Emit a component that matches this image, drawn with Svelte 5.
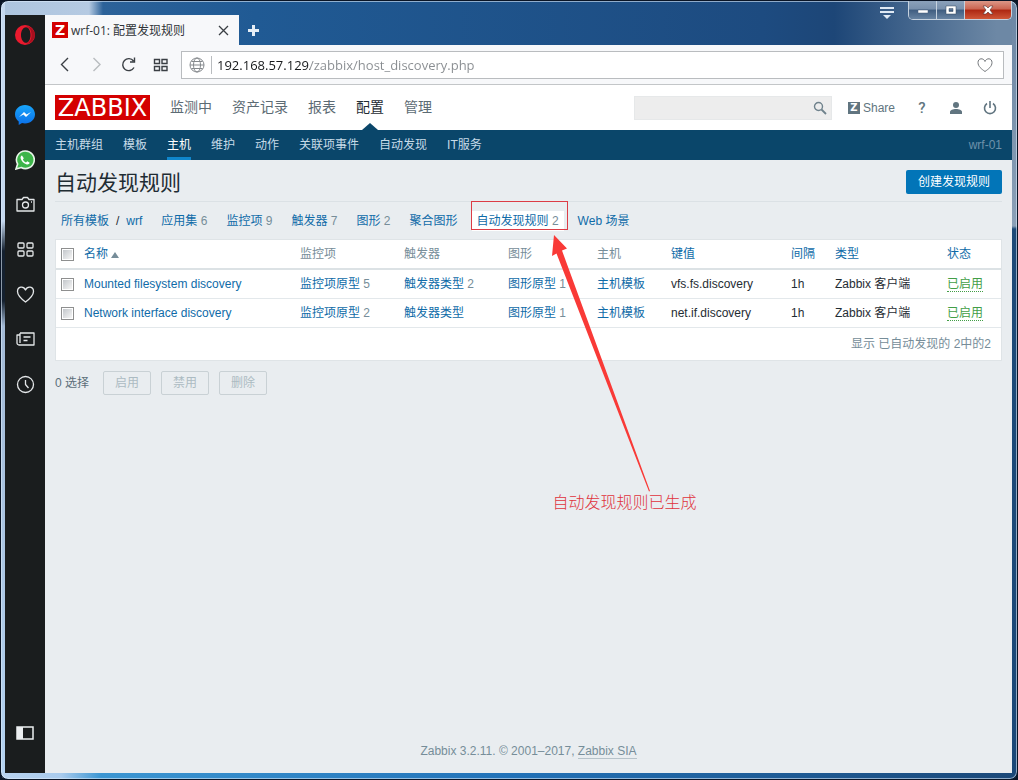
<script lang="ts">
  const mainMenu = ["监测中", "资产记录", "报表", "配置", "管理"];
  const subMenu = ["主机群组", "模板", "主机", "维护", "动作", "关联项事件", "自动发现", "IT服务"];

  const hostLinks = [
    { label: "应用集", count: 6 },
    { label: "监控项", count: 9 },
    { label: "触发器", count: 7 },
    { label: "图形", count: 2 },
    { label: "聚合图形" },
    { label: "自动发现规则", count: 2, selected: true },
    { label: "Web 场景" },
  ];

  const columns = [
    { label: "名称", share: 216, sortable: true, sorted: true },
    { label: "监控项", share: 104 },
    { label: "触发器", share: 104 },
    { label: "图形", share: 89 },
    { label: "主机", share: 74 },
    { label: "键值", share: 120, sortable: true },
    { label: "间隔", share: 44, sortable: true },
    { label: "类型", share: 112, sortable: true },
    { label: "状态", share: 59, sortable: true },
  ];
  const totalShare = 945;

  const rules = [
    { name: "Mounted filesystem discovery", items: 5, triggers: 2, graphs: 1, key: "vfs.fs.discovery" },
    { name: "Network interface discovery", items: 2, triggers: 0, graphs: 1, key: "net.if.discovery" },
  ];

  let url = $state("192.168.57.129/zabbix/host_discovery.php");
  let query = $state("");
  let checked = $state([false, false]);
  let selectedCount = $derived(checked.filter(Boolean).length);

  function toggleAll(event: Event) {
    const on = (event.currentTarget as HTMLInputElement).checked;
    checked = rules.map(() => on);
  }
</script>

<div class="window">
  <div class="window-controls">
    <button class="tab-menu" aria-label="Tab menu">
      <svg width="14" height="13" viewBox="0 0 14 13" fill="#dfe9f4">
        <path d="M0 1h14v2H0zM0 5h14v2H0zM3 9h8l-4 4z" />
      </svg>
    </button>
    <div class="control-group">
      <button aria-label="Minimize">
        <svg width="12" height="12" viewBox="0 0 12 12"><path d="M1 6h10v3H1z" fill="#fff" stroke="#4a5f78" stroke-width=".5" /></svg>
      </button>
      <button aria-label="Maximize">
        <svg width="12" height="12" viewBox="0 0 12 12"><path d="M1 2h10v8H1zM4 4.500v3h4v-3z" fill="#fff" fill-rule="evenodd" stroke="#34485f" stroke-width=".5" /></svg>
      </button>
      <button class="close" aria-label="Close">
        <svg width="12" height="12" viewBox="0 0 12 12"><path d="M1 2h3l2 2 2-2h3L8 6l3 4H8L6 8l-2 2H1l3-4z" fill="#fff" stroke="#57302f" stroke-width=".6" /></svg>
      </button>
    </div>
  </div>

  <aside class="sidebar">
    <button class="opera" aria-label="Opera">
      <svg width="20" height="20" viewBox="0 0 20 20">
        <path d="M10 0a10 10 0 1 0 0 20 10 10 0 0 0 0-20zm1 2.200c2.600 0 4.500 3.300 4.500 7.800s-1.900 7.800-4.500 7.800S6 14.500 6 10s2.400-7.800 5-7.800z" fill="#ea1a2e" />
        <path d="M11 1c3 1 5.500 4 5.500 9s-2.500 8-5.500 9a9.500 9.500 0 0 0 9-9 9.500 9.500 0 0 0-9-9z" fill="#a80f1e" />
      </svg>
    </button>
    <button aria-label="Messenger">
      <svg width="20" height="20" viewBox="0 0 20 20">
        <defs>
          <linearGradient id="messenger" x1="0" y1="0" x2="0" y2="1">
            <stop offset="0" stop-color="#18a5fb" />
            <stop offset="1" stop-color="#0b6fe8" />
          </linearGradient>
        </defs>
        <path d="M10 0C4.400 0 0 4 0 9.300c0 3 1.400 5.500 3.700 7.200V20l3.300-1.900c1 .300 2 .400 3 .400 5.600 0 10-4 10-9.200S15.600 0 10 0z" fill="url(#messenger)" />
        <path d="M4 12l5-5 2.600 2.500L16 7l-5 5-2.600-2.500z" fill="#fff" />
      </svg>
    </button>
    <button aria-label="WhatsApp">
      <svg width="20" height="20" viewBox="0 0 20 20">
        <path d="M10.200 1a8.700 8.700 0 0 0-7.600 13L1 19l5.200-1.500A8.800 8.800 0 1 0 10.200 1z" fill="#3db54a" stroke="#e9f5ea" stroke-width="1.600" />
        <path d="M7 5.500c-.900.300-1.700 1.400-1.400 2.800.700 3 3.300 5.400 6.200 6.100 1.400.300 2.600-.500 2.900-1.600l-2.400-1.500-1.300 1.200c-1.400-.600-2.500-1.700-3.100-3L8.800 8.200z" fill="#fff" />
      </svg>
    </button>
    <button aria-label="Snapshot">
      <svg class="line" width="19" height="19" viewBox="0 0 19 19">
        <path d="M1 4.500h5l1.500-2h4l1.500 2h5V16H1z" /><circle cx="9.500" cy="10" r="3" /><path d="M15 7h1" />
      </svg>
    </button>
    <button aria-label="Speed dial">
      <svg class="line" width="19" height="19" viewBox="0 0 19 19">
        <rect x="2" y="3" width="6" height="5" rx="1" /><rect x="11" y="3" width="6" height="5" rx="1" /><rect x="2" y="11" width="6" height="5" rx="1" /><rect x="11" y="11" width="6" height="5" rx="1" />
      </svg>
    </button>
    <button aria-label="Bookmarks">
      <svg class="line" width="19" height="19" viewBox="0 0 19 19">
        <path d="M9.500 17C5.500 14 1.500 10.500 1.500 6.500c0-5 6-6 8-1.500 2-4.500 8-3.500 8 1.500 0 4-4 7.500-8 10.500z" />
      </svg>
    </button>
    <button aria-label="News">
      <svg class="line" width="19" height="19" viewBox="0 0 19 19">
        <path d="M4 3h14v12H3a2 2 0 0 1-2-2V5h3M4 3v10M7.500 7h7M7.500 10.500h4" />
      </svg>
    </button>
    <button aria-label="History">
      <svg class="line" width="19" height="19" viewBox="0 0 19 19">
        <circle cx="9.500" cy="9.500" r="8" /><path d="M9.500 5v4.500l3 3.500" />
      </svg>
    </button>
    <button class="panel-toggle" aria-label="Toggle sidebar">
      <svg width="18" height="14" viewBox="0 0 18 14">
        <rect x="1" y="1" width="16" height="12" fill="none" stroke="#eceff1" stroke-width="1.500" /><path d="M1 1h6v12H1z" fill="#eceff1" />
      </svg>
    </button>
  </aside>

  <div class="browser">
    <div class="tab-strip">
      <div class="tab">
        <span class="favicon">Z</span>
        <span class="tab-title">wrf-01: 配置发现规则</span>
        <button aria-label="Close tab">
          <svg width="11" height="11" viewBox="0 0 11 11"><path d="M1 1l9 9M10 1l-9 9" stroke="#3a3f44" stroke-width="1.300" /></svg>
        </button>
      </div>
      <button class="new-tab" aria-label="New tab">
        <svg width="11" height="11" viewBox="0 0 11 11"><path d="M4 0h3v4h4v3H7v4H4V7H0V4h4z" fill="#e6eef6" /></svg>
      </button>
    </div>

    <div class="toolbar">
      <button aria-label="Back">
        <svg width="16" height="16" viewBox="0 0 16 16"><path d="M11 1L4.500 7.500 11 14" /></svg>
      </button>
      <button class="faded" aria-label="Forward">
        <svg width="16" height="16" viewBox="0 0 16 16"><path d="M4.500 1L11 7.500 4.500 14" /></svg>
      </button>
      <button aria-label="Reload">
        <svg width="16" height="16" viewBox="0 0 16 16"><path d="M13 10.500A6 6 0 1 1 12.500 4M13.500 .500v4.500H9" /></svg>
      </button>
      <button aria-label="Start page">
        <svg width="16" height="16" viewBox="0 0 16 16"><path d="M1.500 2.500h5v4h-5zM9 2.500h5v4H9zM1.500 9.500h5v4h-5zM9 9.500h5v4H9z" /></svg>
      </button>
      <div class="address">
        <svg width="16" height="16" viewBox="0 0 16 16" fill="none" stroke="#85898d">
          <circle cx="8" cy="8" r="7" /><ellipse cx="8" cy="8" rx="3.500" ry="7" /><path d="M1 8h14M2.500 4.500h11M2.500 11.500h11" />
        </svg>
        <input type="text" aria-label="Address" bind:value={url} />
        <button aria-label="Add to bookmarks">
          <svg width="16" height="16" viewBox="0 0 16 16" fill="none" stroke="#74787c">
            <path d="M8 14.500C4.500 12 1 9.500 1 5.500 1 1 6.500.500 8 4.500 9.500.500 15 1 15 5.500c0 4-3.500 6.500-7 9z" />
          </svg>
        </button>
      </div>
    </div>

    <div class="page" lang="zh-CN">
      <header>
        <a class="logo" href="#dashboard">ZABBIX</a>
        <nav class="main-menu">
          {#each mainMenu as label}
            <a href="#menu" class:active={label === "配置"}>{label}</a>
          {/each}
        </nav>
        <div class="search">
          <input type="text" aria-label="搜索" bind:value={query} />
          <button aria-label="搜索按钮">
            <svg width="14" height="14" viewBox="0 0 14 14" fill="none" stroke="#6f828c" stroke-width="1.400"><circle cx="5.500" cy="5.500" r="4" /><path d="M8.500 8.500L13 13" stroke-width="1.800" /></svg>
          </button>
        </div>
        <a class="share" href="#share"><span>Z</span>Share</a>
        <div class="user-icons">
          <a href="#help" class="help">?</a>
          <a href="#profile" aria-label="Profile">
            <svg width="12" height="12" viewBox="0 0 12 12" fill="#617580"><circle cx="6" cy="3" r="3" /><path d="M0 12v-2c0-2 3-3 6-3s6 1 6 3v2z" /></svg>
          </a>
          <a href="#logout" aria-label="Sign out">
            <svg width="14" height="14" viewBox="0 0 14 14" fill="none" stroke="#617580" stroke-width="1.600"><path d="M4 2.500a5.500 5.500 0 1 0 6 0M7 0v7" /></svg>
          </a>
        </div>
      </header>

      <nav class="sub-menu">
        {#each subMenu as label}
          <a href="#submenu" class:active={label === "主机"}>{label}</a>
        {/each}
        <span class="server">wrf-01</span>
      </nav>

      <main>
        <div class="title-row">
          <h1>自动发现规则</h1>
          <button>创建发现规则</button>
        </div>

        <ul class="host-links">
          <li><a href="#templates">所有模板</a><i>/</i><a href="#wrf">wrf</a></li>
          {#each hostLinks as link}
            <li class:selected={link.selected}>
              <a href="#host">{link.label}</a>{#if link.count}&nbsp;<span>{link.count}</span>{/if}
              {#if link.selected}
                <div class="marker"></div>
                <svg class="arrow" width="110" height="262" viewBox="0 0 110 262" fill="#f93a37">
                  <path d="M5 2L18 15.500l-5 2L101 258l-1 .500L7.500 20.500 3 23z" />
                </svg>
                <p class="note">自动发现规则已生成</p>
              {/if}
            </li>
          {/each}
        </ul>

        <table>
          <colgroup>
            <col class="check-col" />
            {#each columns as col}
              <col style:width="{(col.share / totalShare) * 100}%" />
            {/each}
          </colgroup>
          <thead>
            <tr>
              <th><input type="checkbox" aria-label="全选" onchange={toggleAll} /></th>
              {#each columns as col}
                <th>
                  {#if col.sortable}<a href="#sort">{col.label}{#if col.sorted}<span class="sort"></span>{/if}</a>{:else}{col.label}{/if}
                </th>
              {/each}
            </tr>
          </thead>
          <tbody>
            {#each rules as rule, i}
              <tr>
                <td><input type="checkbox" aria-label={rule.name} bind:checked={checked[i]} /></td>
                <td><a href="#rule">{rule.name}</a></td>
                <td><a href="#items">监控项原型</a> <span>{rule.items}</span></td>
                <td><a href="#triggers">触发器类型</a> {#if rule.triggers}<span>{rule.triggers}</span>{/if}</td>
                <td><a href="#graphs">图形原型</a> <span>{rule.graphs}</span></td>
                <td><a href="#hosts">主机模板</a></td>
                <td>{rule.key}</td>
                <td>1h</td>
                <td>Zabbix 客户端</td>
                <td><a class="enabled" href="#status">已启用</a></td>
              </tr>
            {/each}
            <tr class="summary"><td colspan="10">显示 已自动发现的 2中的2</td></tr>
          </tbody>
        </table>

        <div class="actions">
          <span>{selectedCount} 选择</span>
          {#each ["启用", "禁用", "删除"] as action}
            <button disabled={selectedCount === 0}>{action}</button>
          {/each}
        </div>
      </main>

      <footer>Zabbix 3.2.11. © 2001–2017, <a href="#sia">Zabbix SIA</a></footer>
    </div>
  </div>
</div>

<style>
  :global(body) {
    background: #0a1526;
  }

  * {
    box-sizing: border-box;
  }

  button {
    padding: 0;
    border: 0;
    background: none;
    font: inherit;
    cursor: pointer;
  }

  a {
    color: #0f6ba8;
    text-decoration: none;
  }

  svg {
    display: block;
  }

  .window {
    position: relative;
    display: flex;
    min-height: 100vh;
    padding: 14px 5px 6px 4px;
    border: 1px solid #0a1526;
    border-radius: 8px;
    background:
      linear-gradient(90deg, #b9d3ef 0, #a9cbed 60px, #3c96d2 100px, #2272b8 50%, #1b4878 100%) bottom / 100% 6px no-repeat,
      linear-gradient(#c5d9f0 0, #c5d9f0 220px, #14202f 250px, #14202f 300px, #a3bad6 325px, #b4d3f2 100%) left / 4px 100% no-repeat,
      linear-gradient(#6b86a4 0, #8ba0b7 225px, #1d4a78 228px, #1b4878 100%) right / 5px 100% no-repeat,
      linear-gradient(90deg, #adc5df 0, #b5cae2 88px, #2c6299 102px, #205a94 25%, #1d4b80 75%, #1d4677 82%, #6d88a5 98%);
    box-shadow: inset 0 0 0 1px rgba(220, 235, 250, 0.6);
    font-family: "Liberation Sans", "Noto Sans CJK SC", sans-serif;
    font-size: 12px;
  }

  .window-controls {
    position: absolute;
    top: 0;
    right: 5px;
    display: flex;
    align-items: flex-start;
    gap: 14px;
  }

  .tab-menu {
    padding-top: 5px;
  }

  .control-group {
    display: flex;
    border: 1px solid #c6d2df;
    border-top: 0;
    border-radius: 0 0 5px 5px;
    overflow: hidden;
  }

  .control-group button {
    display: grid;
    place-items: center;
    width: 28px;
    height: 18px;
    border-right: 1px solid #c6d2df;
    background: linear-gradient(#8ba1ba 0, #7890ac 45%, #3f5d80 50%, #6783a2 100%);
  }

  .control-group .close {
    width: 46px;
    border-right: 0;
    background: linear-gradient(#dc9787 0, #cb6450 45%, #ad2712 50%, #cf5738 100%);
  }

  .sidebar {
    display: flex;
    flex: 0 0 40px;
    flex-direction: column;
    background: #1a1d1e;
  }

  .sidebar button {
    display: grid;
    place-items: center;
    height: 45px;
  }

  .sidebar .opera {
    height: 40px;
    margin-bottom: 37px;
  }

  .sidebar .panel-toggle {
    margin-top: auto;
    margin-bottom: 18px;
  }

  .line {
    fill: none;
    stroke: #e4e7e9;
    stroke-width: 1.3;
    stroke-linejoin: round;
  }

  .browser {
    display: flex;
    flex: 1;
    flex-direction: column;
    min-width: 0;
  }

  .tab-strip {
    display: flex;
    height: 30px;
  }

  .tab {
    display: flex;
    align-items: center;
    width: 194px;
    padding: 0 10px 0 7px;
    background: #f7f8fa;
    color: #2f3438;
    font-family: "Open Sans", "Noto Sans CJK SC", sans-serif;
  }

  .favicon {
    width: 16px;
    height: 16px;
    margin-right: 3px;
    background: #d40000;
    color: #fff;
    font: bold 14px/16px "DejaVu Sans", sans-serif;
    text-align: center;
  }

  .tab-title {
    flex: 1;
    white-space: nowrap;
  }

  .new-tab {
    padding: 0 9px;
  }

  .toolbar {
    display: flex;
    align-items: center;
    gap: 16px;
    height: 40px;
    padding: 0 8px 0 12px;
    border-bottom: 1px solid #c3c6c8;
    background: #f7f8fa;
  }

  .toolbar > button {
    fill: none;
    stroke: #3a3f44;
    stroke-width: 1.4;
  }

  .toolbar > .faded {
    stroke: #b9bcbf;
  }

  .address {
    display: flex;
    flex: 1;
    align-items: center;
    height: 28px;
    margin-left: -4px;
    padding: 0 10px 0 7px;
    border: 1px solid #b9bcbf;
    background: #fff;
  }

  .address input {
    flex: 1;
    height: 18px;
    margin-left: 6px;
    padding: 0 0 0 5px;
    border: 0;
    border-left: 1px solid #b9bcbf;
    outline: 0;
    background: linear-gradient(90deg, #17191b 98px, #888c90 98px);
    background-clip: text;
    color: transparent;
    font: 13px/18px "Open Sans", sans-serif;
  }

  .page {
    display: flex;
    flex: 1;
    flex-direction: column;
    background: #e9edf0;
    color: #1f2c33;
    line-height: 18px;
  }

  header {
    display: flex;
    align-items: center;
    height: 45px;
    padding: 0 10px;
    background: #fff;
  }

  .logo {
    width: 95px;
    padding-top: 1px;
    background: #d40000;
    color: #fff;
    font: 24px/24px "DejaVu Sans", sans-serif;
    text-align: center;
  }

  .main-menu {
    display: flex;
    gap: 20px;
    margin-right: auto;
    margin-left: 20px;
    font-size: 14px;
    line-height: 45px;
    white-space: nowrap;
  }

  .main-menu a {
    position: relative;
    color: #5c6b74;
  }

  .main-menu .active {
    color: #1f2c33;
  }

  .main-menu .active::after {
    position: absolute;
    bottom: 0;
    left: 50%;
    margin-left: -8px;
    border: 8px solid transparent;
    border-top: 0;
    border-bottom: 7px solid #0a466a;
    content: "";
  }

  .search {
    display: flex;
    width: 198px;
    height: 24px;
    margin-right: 16px;
    padding: 0 4px;
    border: 1px solid #e6e8e9;
    background: #ededed;
  }

  .search input {
    flex: 1;
    min-width: 0;
    border: 0;
    outline: 0;
    background: none;
  }

  .share {
    display: flex;
    align-items: center;
    gap: 3px;
    margin-right: 15px;
    color: #617580;
  }

  .share span {
    width: 12px;
    height: 12px;
    background: #617580;
    color: #fff;
    font: bold 10px/12px "DejaVu Sans", sans-serif;
    text-align: center;
  }

  .user-icons {
    display: flex;
    gap: 10px;
  }

  .user-icons a {
    display: grid;
    place-items: center;
    width: 24px;
    height: 24px;
    color: #617580;
  }

  .user-icons .help {
    font-family: Roboto, sans-serif;
    font-size: 15px;
    font-weight: 500;
  }

  .sub-menu {
    display: flex;
    gap: 20px;
    height: 30px;
    padding: 0 10px;
    background: #0a466a;
    line-height: 30px;
    white-space: nowrap;
  }

  .sub-menu a {
    color: #c7dbe8;
  }

  .sub-menu .active {
    border-bottom: 3px solid #0f86cc;
    color: #fff;
  }

  .server {
    margin-left: auto;
    color: #6d92aa;
  }

  main {
    padding: 0 10px;
  }

  .title-row {
    display: flex;
    align-items: center;
    justify-content: space-between;
    padding: 10px 0 7px;
    border-bottom: 1px solid #dbe1e5;
  }

  h1 {
    margin: 0;
    font-size: 21px;
    font-weight: normal;
    line-height: 26px;
    height: 24px;
  }

  .title-row button {
    height: 24px;
    padding: 0 12px;
    border-radius: 2px;
    background: #0275b8;
    color: #fff;
  }

  .host-links {
    display: flex;
    gap: 9px;
    margin: 9px 0 8px;
    padding: 0 1px;
    list-style: none;
    line-height: 20px;
    white-space: nowrap;
  }

  .host-links li {
    position: relative;
    padding: 0 5px;
  }

  .host-links i {
    margin: 0 7px;
    font-style: normal;
  }

  .host-links span,
  td span {
    color: #768d99;
  }

  .host-links .selected {
    background: #fff;
  }

  .marker {
    position: absolute;
    top: -10px;
    right: -4px;
    bottom: 1px;
    left: -1px;
    border: 1px solid #dc3c46;
  }

  .arrow {
    position: absolute;
    top: 22px;
    left: 77px;
    pointer-events: none;
  }

  .note {
    position: absolute;
    top: 282px;
    left: 81px;
    margin: 0;
    color: #e0323c;
    font-size: 16px;
    font-weight: 300;
  }

  table {
    width: 100%;
    border: 1px solid #dfe4e7;
    border-spacing: 0;
    background: #fff;
    table-layout: fixed;
  }

  .check-col {
    width: 23px;
  }

  th,
  td {
    height: 29px;
    padding: 0 5px;
    border-bottom: 1px solid #e3e8eb;
    text-align: left;
    white-space: nowrap;
  }

  th {
    height: 30px;
    border-bottom: 2px solid #dce2e5;
    color: #768d99;
    font-weight: normal;
  }

  .sort {
    display: inline-block;
    margin-left: 3px;
    border: 4px solid transparent;
    border-top: 0;
    border-bottom: 6px solid #768d99;
  }

  input[type="checkbox"] {
    display: block;
    width: 13px;
    height: 13px;
    margin: 0;
    border: 1px solid #8e8f8f;
    background: linear-gradient(135deg, #c3c7cb, #f6f6f6) content-box #f4f4f4;
    padding: 1px;
    appearance: none;
  }

  input[type="checkbox"]:checked {
    background: #0275b8 content-box;
  }

  .enabled {
    border-bottom: 1px dotted #429e47;
    color: #429e47;
  }

  .summary td {
    height: 32px;
    padding-right: 10px;
    border-bottom: 0;
    color: #768d99;
    text-align: right;
  }

  .actions {
    display: flex;
    align-items: center;
    gap: 10px;
    margin-top: 10px;
    color: #5c6f7a;
  }

  .actions span {
    margin-right: 4px;
  }

  .actions button {
    width: 48px;
    height: 24px;
    border: 1px solid #c9d1d5;
    border-radius: 2px;
    color: #5c6f7a;
  }

  .actions button:disabled {
    color: #acbbc2;
    cursor: default;
  }

  footer {
    margin-top: auto;
    padding: 20px 10px 13px;
    color: #768d99;
    text-align: center;
  }

  footer a {
    border-bottom: 1px solid #b7c3ca;
    color: inherit;
  }
</style>
